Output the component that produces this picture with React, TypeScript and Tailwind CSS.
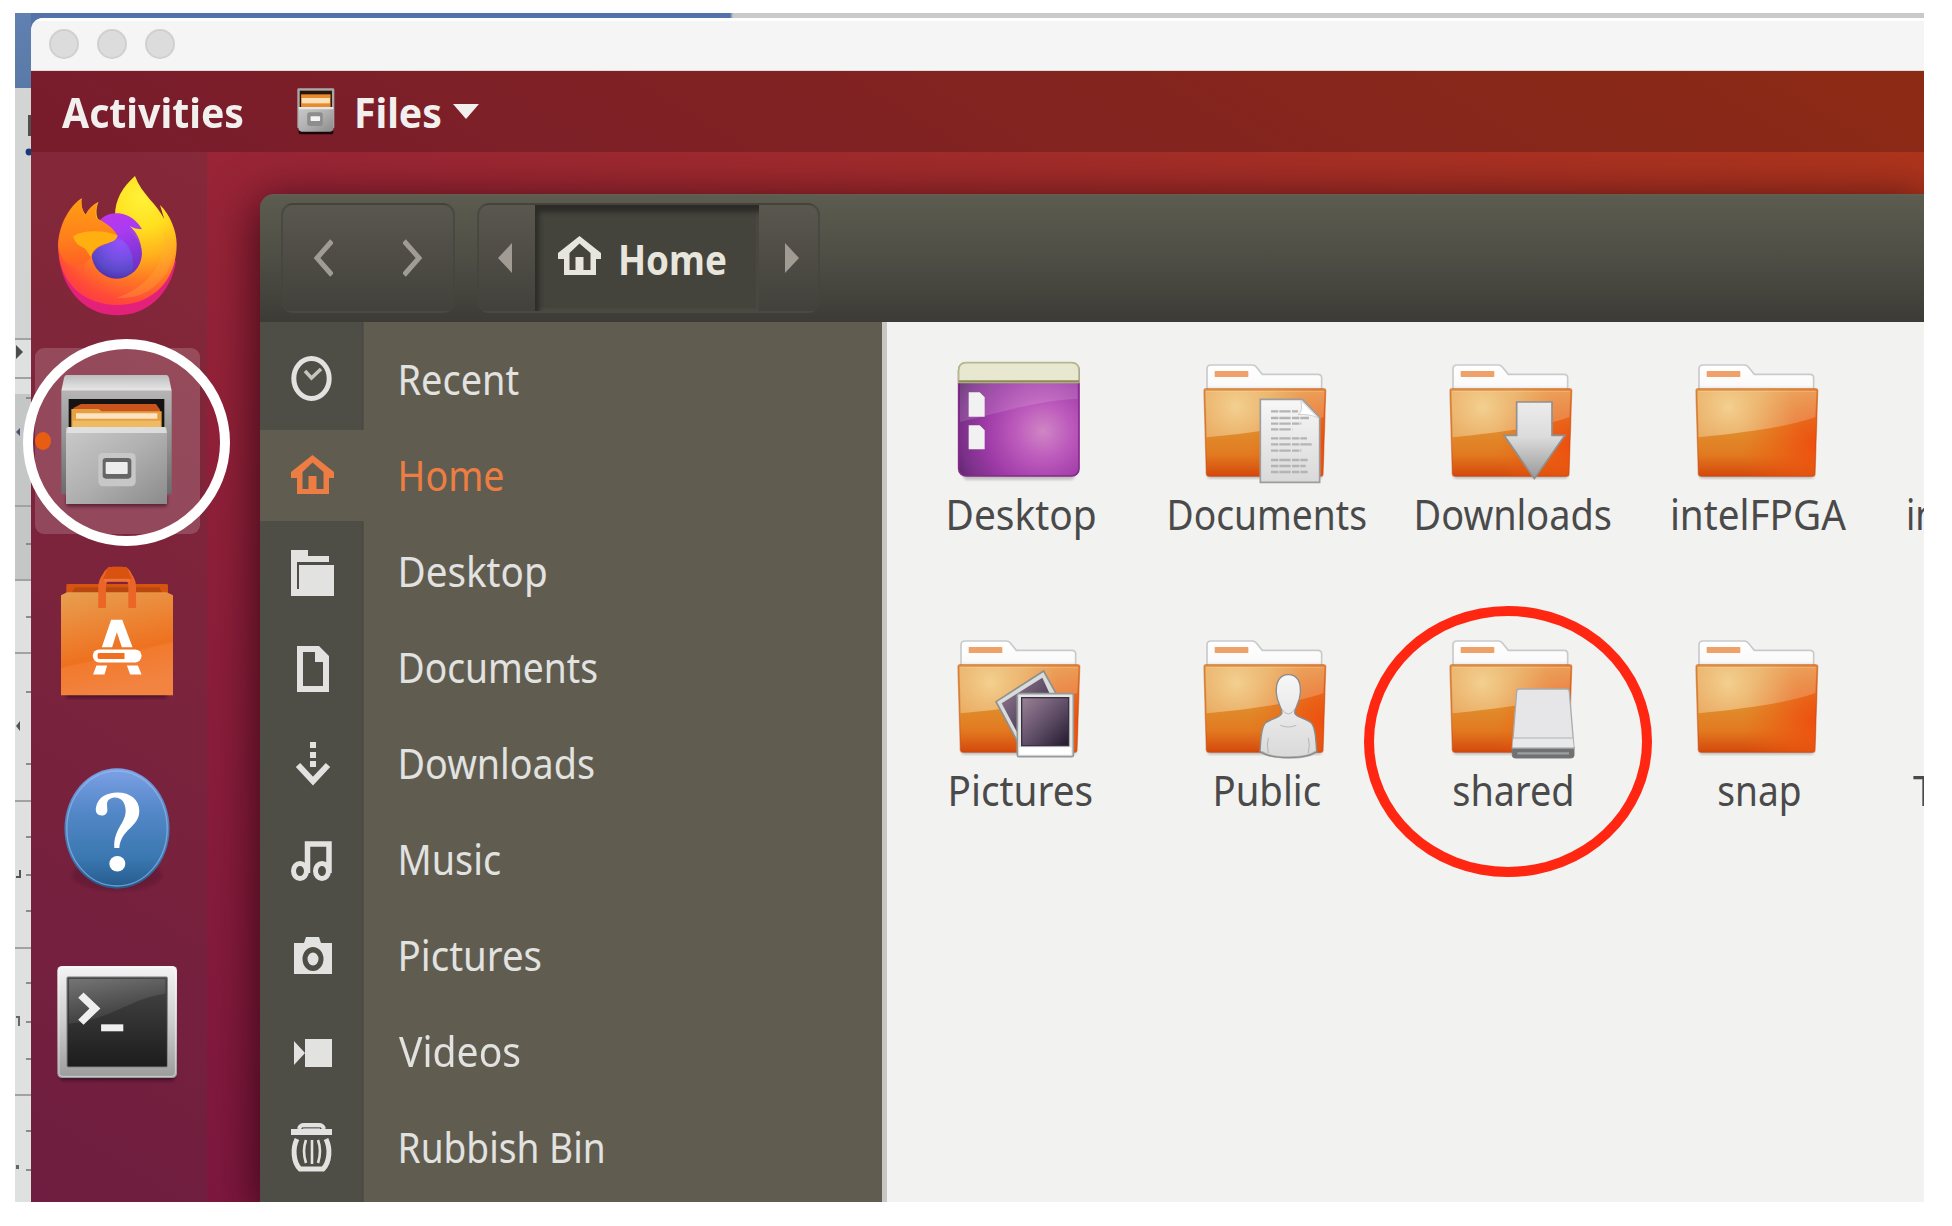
import React, { useLayoutEffect, useState } from "react";

type LabelProps = { children: string; width: number; bold?: boolean; className?: string };

/* Single line of text whose glyphs are condensed to occupy `width` pixels. */
function Label({ children, width, bold, className = "" }: LabelProps) {
  const [fit, setFit] = useState({ scale: 1, left: 0 });
  useLayoutEffect(() => {
    const ctx = document.createElement("canvas").getContext("2d");
    if (!ctx) return;
    ctx.font = `${bold ? 700 : 400} 42px "Noto Sans"`;
    const m = ctx.measureText(children);
    const bearing = m.actualBoundingBoxLeft * 0.4;
    const scale = width / (m.actualBoundingBoxRight + bearing);
    setFit({ scale, left: bearing * scale });
  }, [children, width, bold]);
  return (
    <div className={`h-[58px] shrink-0 ${className}`} style={{ width }}>
      <span
        className={`block w-max origin-top-left whitespace-nowrap font-['Noto_Sans',sans-serif] text-[42px] leading-[58px] ${bold ? "font-bold" : "font-normal"}`}
        style={{ transform: `translateX(${fit.left}px) scaleX(${fit.scale})` }}
      >
        {children}
      </span>
    </div>
  );
}

function Defs() {
  return (
    <svg className="absolute h-0 w-0" aria-hidden>
      <defs>
        <radialGradient id="ffBody" gradientUnits="userSpaceOnUse" cx="425" cy="590" r="365">
          <stop offset="0" stopColor="#fff238" />
          <stop offset=".25" stopColor="#ffe01f" />
          <stop offset=".48" stopColor="#ffb01c" />
          <stop offset=".68" stopColor="#ff7724" />
          <stop offset=".86" stopColor="#ff4a38" />
          <stop offset="1" stopColor="#ff3450" />
        </radialGradient>
        <linearGradient id="ffHead" x1="0" y1="0" x2="0" y2="1">
          <stop offset="0" stopColor="#ff9f12" />
          <stop offset=".6" stopColor="#ff7f1c" />
          <stop offset="1" stopColor="#ff6024" />
        </linearGradient>
        <radialGradient id="ffGlobe" gradientUnits="userSpaceOnUse" cx="362" cy="722" r="120">
          <stop offset="0" stopColor="#9450ff" />
          <stop offset=".45" stopColor="#7350e2" />
          <stop offset=".75" stopColor="#5a48c8" />
          <stop offset="1" stopColor="#4d2ba6" />
        </radialGradient>
        <linearGradient id="ffTop" gradientUnits="userSpaceOnUse" x1="340" y1="637" x2="400" y2="800">
          <stop offset="0" stopColor="#bd36ee" />
          <stop offset=".35" stopColor="#a73cf0" />
          <stop offset="1" stopColor="#7a24c4" stopOpacity="0.6" />
        </linearGradient>
        <linearGradient id="metal" x1="0" y1="0" x2="1" y2="1">
          <stop offset="0" stopColor="#cacaca" />
          <stop offset=".5" stopColor="#b0b0b0" />
          <stop offset="1" stopColor="#8b8b8b" />
        </linearGradient>
        <linearGradient id="cabTop" x1="0" y1="0" x2="0" y2="1">
          <stop offset="0" stopColor="#bdbdbd" />
          <stop offset="1" stopColor="#e8e8e8" />
        </linearGradient>
        <linearGradient id="cabBack" x1="0" y1="0" x2="0" y2="1">
          <stop offset="0" stopColor="#b5b5b5" />
          <stop offset="1" stopColor="#6c6c6c" />
        </linearGradient>
        <linearGradient id="paper" x1="0" y1="0" x2="0" y2="1">
          <stop offset="0" stopColor="#f7f7f7" />
          <stop offset="1" stopColor="#d9d9d9" />
        </linearGradient>
        <linearGradient id="arrow" x1="0" y1="0" x2="0" y2="1">
          <stop offset="0" stopColor="#ececec" />
          <stop offset=".45" stopColor="#dcdcdc" />
          <stop offset="1" stopColor="#989898" />
        </linearGradient>
        <linearGradient id="bag" x1="0" y1="0" x2=".25" y2="1">
          <stop offset="0" stopColor="#e79f50" />
          <stop offset=".4" stopColor="#ec8434" />
          <stop offset=".68" stopColor="#ee711f" />
          <stop offset=".7" stopColor="#f17a2d" />
          <stop offset="1" stopColor="#f28340" />
        </linearGradient>
        <linearGradient id="help" x1="0" y1="0" x2="0" y2="1">
          <stop offset="0" stopColor="#7da1e6" />
          <stop offset=".35" stopColor="#5488c8" />
          <stop offset=".75" stopColor="#3a77b0" />
          <stop offset="1" stopColor="#245a8c" />
        </linearGradient>
        <linearGradient id="termFrame" x1="0" y1="0" x2="0" y2="1">
          <stop offset="0" stopColor="#f4f4f4" />
          <stop offset=".5" stopColor="#cdcdcd" />
          <stop offset="1" stopColor="#9b9b9b" />
        </linearGradient>
        <linearGradient id="termScreen" x1="0" y1="0" x2="0" y2="1">
          <stop offset="0" stopColor="#474747" />
          <stop offset="1" stopColor="#1c1c1c" />
        </linearGradient>
        <linearGradient id="termGloss" x1="0" y1="0" x2=".6" y2="1">
          <stop offset="0" stopColor="#fff" stopOpacity=".25" />
          <stop offset="1" stopColor="#fff" stopOpacity="0.02" />
        </linearGradient>
        <linearGradient id="folder" x1="0" y1="0" x2="0" y2="1">
          <stop offset="0" stopColor="#e39a3e" />
          <stop offset=".5" stopColor="#e08c2c" />
          <stop offset=".75" stopColor="#e27a20" />
          <stop offset="1" stopColor="#d4480c" />
        </linearGradient>
        <radialGradient id="folderRed" gradientUnits="userSpaceOnUse" cx="370" cy="250" r="230">
          <stop offset="0" stopColor="#ee4d0e" />
          <stop offset=".3" stopColor="#ec5510" stopOpacity=".8" />
          <stop offset="1" stopColor="#ee6010" stopOpacity="0" />
        </radialGradient>
        <radialGradient id="folderGlow" gradientUnits="userSpaceOnUse" cx="100" cy="135" r="200">
          <stop offset="0" stopColor="#f6da9c" stopOpacity=".8" />
          <stop offset="1" stopColor="#f0b878" stopOpacity="0" />
        </radialGradient>
        <linearGradient id="tab" x1="0" y1="0" x2="0" y2="1">
          <stop offset="0" stopColor="#ffffff" />
          <stop offset=".75" stopColor="#fafafa" />
          <stop offset="1" stopColor="#d8d8d8" />
        </linearGradient>
        <radialGradient id="desk" gradientUnits="userSpaceOnUse" cx="258" cy="208" r="290">
          <stop offset="0" stopColor="#d086c4" />
          <stop offset=".28" stopColor="#bd5bbd" />
          <stop offset=".6" stopColor="#9d3aa6" />
          <stop offset=".85" stopColor="#7a3088" />
          <stop offset="1" stopColor="#592569" />
        </radialGradient>
        <linearGradient id="photo" x1="0" y1="0" x2="1" y2="1">
          <stop offset="0" stopColor="#9a8296" />
          <stop offset=".5" stopColor="#62506a" />
          <stop offset="1" stopColor="#231a2b" />
        </linearGradient>
        <filter id="soft" x="-20%" y="-20%" width="140%" height="140%">
          <feGaussianBlur stdDeviation="5" />
        </filter>
      </defs>
    </svg>
  );
}

function Firefox() {
  return (
    <svg viewBox="174 525 357 420" className="mt-[24px] ml-[27px] h-[140px] w-[119px] shrink-0 overflow-visible">
      <path d="M176 765C190 880 265 943 352 943C440 943 512 880 528 780Z" fill="#e3217a" />
      <path
        d="M245 592C203 620 174 680 174 738C178 850 255 912 352 912C455 912 530 840 530 730C530 690 510 640 480 612L493 655C472 610 425 580 405 525C368 558 345 595 345 645L300 662C288 650 286 630 295 603C278 612 266 625 257 641C247 630 242 612 245 592Z"
        fill="url(#ffBody)"
      />
      <path d="M493 690C500 790 440 860 350 890C440 900 515 830 526 740Z" fill="#ffb13b" opacity=".3" />
      <ellipse cx="350" cy="758" rx="75" ry="75" fill="url(#ffGlobe)" />
      <path
        d="M296 664C308 642 335 634 357 637C390 641 412 660 426 685C414 684 400 682 389 675C412 695 425 724 426 758C424 785 412 806 396 817C408 770 385 715 350 712L290 690Z"
        fill="url(#ffTop)"
      />
      <path
        d="M245 592C212 618 178 670 175 735C185 800 240 815 274 768C280 748 295 735 325 727L352 705C348 690 320 665 290 652C284 638 287 620 295 603C276 612 266 625 257 641C247 630 242 612 245 592Z"
        fill="url(#ffHead)"
      />
      <path
        d="M219 706C245 688 285 690 315 692L353 703C350 724 325 724 303 733C285 741 276 752 273 768C261 755 262 742 240 735C228 728 222 716 219 706Z"
        fill="#ffb010"
      />
    </svg>
  );
}

function Cabinet({ className }: { className: string }) {
  return (
    <svg viewBox="185 128 333 402" preserveAspectRatio="none" className={className}>
      <rect x="200" y="490" width="304" height="36" rx="10" fill="#3c0c22" opacity=".6" filter="url(#soft)" />
      <path d="M186 178H517V488H186Z" fill="url(#cabBack)" />
      <path d="M203 131H500Q507 131 509 140L517 178H186L194 140Q196 131 203 131Z" fill="url(#cabTop)" />
      <rect x="208" y="203" width="287" height="90" fill="#161412" />
      <path d="M222 230L245 218H470L482 235V290H222Z" fill="#c9541c" />
      <path d="M216 233H298L306 240H487V290H216Z" fill="#e6a041" />
      <path d="M230 246H474V262H230Z" fill="#fbe3c4" />
      <path d="M220 268H484V290H220Z" fill="#eebb63" />
      <path d="M206 287H498Q503 287 503 292V518H200V292Q201 287 206 287Z" fill="url(#metal)" />
      <path d="M206 287H498L503 305H202Z" fill="#e6e6e6" opacity=".8" />
      <rect x="297" y="365" width="112" height="100" rx="14" fill="#c7c7c7" />
      <rect x="310" y="380" width="86" height="62" rx="10" fill="#666" />
      <rect x="319" y="392" width="66" height="36" rx="3" fill="#ededed" />
    </svg>
  );
}

function SmallCabinet() {
  return (
    <svg viewBox="892 264 112 138" preserveAspectRatio="none" className="mt-[17px] ml-[54px] h-[46px] w-[38px] shrink-0 overflow-visible">
      <rect x="897" y="385" width="102" height="18" rx="5" fill="#1c0408" />
      <rect x="893" y="265" width="109" height="120" rx="4" fill="#a9a9a9" />
      <rect x="900" y="272" width="95" height="50" fill="#2a1608" />
      <rect x="904" y="283" width="87" height="38" fill="#e98a2c" />
      <rect x="906" y="294" width="83" height="16" fill="#fbe0b8" />
      <path d="M897 321H999V388Q998 395 990 395H906Q898 395 897 388Z" fill="url(#metal)" />
      <path d="M897 321H999V328H897Z" fill="#e6e6e6" />
      <rect x="922" y="337" width="46" height="41" rx="8" fill="#8d8d8d" />
      <rect x="932" y="349" width="28" height="14" rx="2" fill="#f4f4f4" />
    </svg>
  );
}

function SoftwareBag() {
  return (
    <svg viewBox="184 706 335 400" preserveAspectRatio="none" className="mt-[32px] ml-[30px] h-[133px] w-[112px] shrink-0 overflow-visible">
      <rect x="200" y="1075" width="300" height="28" fill="#3c0c22" opacity=".7" filter="url(#soft)" />
      <path d="M205 760H497L504 762V800H200V762Z" fill="#d65410" />
      <path d="M225 770H478L490 796H210Z" fill="#a83f10" opacity=".6" />
      <path d="M184 794L202 785H500L519 794V1095H184Z" fill="url(#bag)" />
      <path d="M307 832V770Q307 752 318 738Q326 720 340 720H366Q380 720 387 738Q397 752 397 770V832" fill="none" stroke="#eb6626" strokeWidth="23" />
      <path d="M325 709H380L396 745H310Z" fill="#d95210" />
      <path d="M313 749H390" stroke="#f0733a" strokeWidth="9" />
      <path d="M334 868H367L398 950H366L351 905L337 950H306Z" fill="#fff" />
      <rect x="279" y="957" width="146" height="39" rx="19" fill="#fff" />
      <path d="M296 968H374V986H296Q290 977 296 968Z" fill="#f0701f" />
      <path d="M290 1005H322L314 1032H280Z" fill="#fff" />
      <path d="M381 1005H414L425 1032H391Z" fill="#fff" />
    </svg>
  );
}

function Help() {
  return (
    <svg viewBox="192 107 318 364" className="mt-[69px] ml-[33px] h-[121px] w-[106px] shrink-0 overflow-visible">
      <ellipse cx="351" cy="430" rx="135" ry="46" fill="#3c0c22" opacity=".25" filter="url(#soft)" />
      <ellipse cx="351" cy="289" rx="158" ry="181" fill="url(#help)" />
      <ellipse cx="351" cy="289" rx="151" ry="173" fill="none" stroke="#9dc0ee" strokeWidth="4" opacity=".6" />
      <path
        d="M305 250C290 250 285 237 288 225C293 195 322 181 352 181C392 181 418 203 418 236C418 285 362 290 358 348H343C340 290 377 275 377 235C377 212 364 196 345 196C333 196 321 203 321 215C321 225 322 228 322 234C322 243 315 250 305 250Z"
        fill="#fff"
      />
      <ellipse cx="352" cy="395" rx="24" ry="23" fill="#fff" />
    </svg>
  );
}

function Terminal() {
  return (
    <svg viewBox="170 704 365 345" className="mt-[76px] ml-[26px] h-[115px] w-[121px] shrink-0 overflow-visible">
      <rect x="180" y="1010" width="345" height="42" rx="10" fill="#300a20" opacity=".7" filter="url(#soft)" />
      <rect x="171" y="706" width="361" height="338" rx="14" fill="url(#termFrame)" />
      <rect x="176" y="711" width="351" height="328" rx="10" fill="none" stroke="#fff" strokeWidth="3" opacity=".5" />
      <rect x="200" y="739" width="303" height="272" rx="3" fill="url(#termScreen)" stroke="#8a8a8a" strokeWidth="3" />
      <path d="M206 745H497V790C400 800 330 870 206 880Z" fill="url(#termGloss)" />
      <path d="M234 802L250 786L301 834L250 883L234 868L268 834Z" fill="#efefef" />
      <rect x="303" y="882" width="67" height="21" fill="#efefef" />
    </svg>
  );
}

function Ruler() {
  const short = [398, 544, 617, 692, 764, 837, 875, 911, 983, 1022, 1059, 1131, 1170];
  const long = [339, 378, 506, 580, 653, 801, 948, 1095];
  return (
    <svg viewBox="15 88 16 1114" className="h-[1114px] w-4">
      <rect x="15" y="88" width="16" height="1114" fill="#dfe0e0" />
      <rect x="15" y="88" width="16" height="250" fill="#d3d4d4" />
      <rect x="15" y="394" width="16" height="186" fill="#c5c6c6" />
      {long.map((y) => (
        <rect key={y} x="15" y={y - 1} width="16" height="2" fill="#a2a2a2" />
      ))}
      {short.map((y) => (
        <rect key={y} x="26" y={y - 1} width="5" height="2" fill="#8c8c8c" />
      ))}
      <path d="M16 345L23 352L16 359Z" fill="#4c4c4c" />
      <path d="M20 428V436L16 432Z" fill="#4e4e66" />
      <path d="M20 721V731L16 726Z" fill="#555" />
      <path d="M16 877H20V870" fill="none" stroke="#555" strokeWidth="2" />
      <path d="M16 1017H19V1026" fill="none" stroke="#666" strokeWidth="2" />
      <rect x="16" y="1165" width="3" height="4" fill="#666" />
      <rect x="28" y="115" width="3" height="21" fill="#505050" />
      <circle cx="29" cy="152" r="3.4" fill="#143c7c" />
    </svg>
  );
}

function Dock() {
  return (
    <aside className="flex w-[176px] shrink-0 flex-col bg-[rgba(60,60,64,0.2)]">
      <Firefox />
      <div className="mt-[32px] ml-1 flex h-[186px] w-[165px] shrink-0 items-start rounded-[9px] bg-white/17">
        <span className="mt-[84px] h-[18px] w-[16px] rounded-[50%] bg-[#e95d13]" />
        <Cabinet className="mt-[26px] ml-[10px] h-[134px] w-[111px] overflow-visible" />
      </div>
      <SoftwareBag />
      <Help />
      <Terminal />
    </aside>
  );
}

const HOME_PATH = "M21.5 1L0 18V24H6V40H38V24H43V18ZM21.5 8.5L32.5 18V35H25.5V22H17.5V35H11.5V18Z";

function HomeIcon({ className }: { className: string }) {
  return (
    <svg viewBox="0 0 43 48" className={className} fill="currentColor">
      <path fillRule="evenodd" d={HOME_PATH} />
    </svg>
  );
}

function HeaderBar() {
  return (
    <header className="flex h-[128px] shrink-0 bg-linear-to-b from-[#5c5c50] via-[#4f4e45] to-[#3c3b36] pt-[9px] pl-[21px] text-[#a09c94] shadow-[inset_0_2px_0_#62635440]">
      <div className="flex h-[110px] w-[174px] items-center justify-between rounded-[12px] border-2 border-[#45453d]/70 bg-linear-to-b from-[#5a574f] to-[#42413b] px-[30px]">
        <svg viewBox="0 0 20 38" className="h-[38px] w-5" fill="none" stroke="currentColor" strokeWidth="5">
          <path d="M19 2L4 19L19 36" />
        </svg>
        <svg viewBox="0 0 20 38" className="h-[38px] w-5" fill="none" stroke="currentColor" strokeWidth="5">
          <path d="M1 2L16 19L1 36" />
        </svg>
      </div>
      <div className="ml-[22px] flex h-[110px] w-[343px] items-stretch overflow-hidden rounded-[12px] border-2 border-[#45453d]/70 bg-linear-to-b from-[#5a574f] to-[#42413b]">
        <div className="flex w-[56px] items-center justify-center">
          <svg viewBox="0 0 14 30" className="ml-[-5px] h-[30px] w-[14px]" fill="currentColor">
            <path d="M14 0V30L0 15Z" />
          </svg>
        </div>
        <div className="flex w-[224px] bg-[#44433c] text-[#e8e6dc] shadow-[inset_4px_7px_5px_#2c2b27,inset_-3px_-3px_2px_#4c4943]">
          <HomeIcon className="mt-[30px] ml-[23px] h-12 w-[43px]" />
          <Label bold width={107} className="mt-[25px] ml-[18px]">Home</Label>
        </div>
        <div className="flex flex-1 items-center">
          <svg viewBox="0 0 14 30" className="ml-[26px] h-[30px] w-[14px]" fill="currentColor">
            <path d="M0 0V30L14 15Z" />
          </svg>
        </div>
      </div>
    </header>
  );
}

type Place = { name: string; width: number; icon: React.ReactNode };

const places: Place[] = [
  {
    name: "Recent",
    width: 120,
    icon: (
      <g fill="none" stroke="currentColor">
        <ellipse cx="20.5" cy="20.5" rx="17.7" ry="20" strokeWidth="5" />
        <path d="M14 13L20.5 20L30 11" strokeWidth="3.5" opacity=".8" />
      </g>
    ),
  },
  { name: "Home", width: 104, icon: <path fillRule="evenodd" d={HOME_PATH} /> },
  {
    name: "Desktop",
    width: 147,
    icon: <path fillRule="evenodd" d="M0 0H17V6H38V12H6V39H8V15H43V46H0Z" />,
  },
  {
    name: "Documents",
    width: 198,
    icon: <path fillRule="evenodd" d="M6 0H28L38 10V46H6ZM12 6V40H32V16H24V6Z" />,
  },
  {
    name: "Downloads",
    width: 195,
    icon: (
      <g>
        <rect x="19" y="0" width="6" height="6" />
        <rect x="19" y="10" width="6" height="6" />
        <rect x="19" y="19" width="6" height="6" />
        <path d="M7 23L22 39L37 23" fill="none" stroke="currentColor" strokeWidth="6" />
      </g>
    ),
  },
  {
    name: "Music",
    width: 101,
    icon: (
      <g fill="none" stroke="currentColor">
        <ellipse cx="9" cy="33" rx="6.5" ry="7.5" strokeWidth="5" />
        <ellipse cx="31" cy="33" rx="6.5" ry="7.5" strokeWidth="5" />
        <path d="M16.5 35V6H38V35" strokeWidth="5.5" />
      </g>
    ),
  },
  {
    name: "Pictures",
    width: 142,
    icon: (
      <g>
        <path fillRule="evenodd" d="M3 9H13L15 3H28L30 9H41V40H3ZM22 13A10.500 12 0 1 0 22 37A10.500 12 0 1 0 22 13Z" />
        <ellipse cx="22" cy="25" rx="5.500" ry="6.500" />
      </g>
    ),
  },
  {
    name: "Videos",
    width: 121,
    icon: <path d="M14 9H41V37H14ZM3 11L14 23L3 35Z" />,
  },
  {
    name: "Rubbish Bin",
    width: 204,
    icon: (
      <g fill="none" stroke="currentColor">
        <path d="M8 3Q9 -1 13 -1H28Q32 -1 33 3" strokeWidth="4" />
        <path d="M12 2.500H29" strokeWidth="2" opacity=".6" />
        <path d="M0 6H41" strokeWidth="6" />
        <path d="M6 13C1.500 22 2 36 9 43H32C39 36 39.500 22 35 13" strokeWidth="5" />
        <path d="M15 14Q11 25 15 37M21 14V38M27 14Q31 25 27 37" strokeWidth="2.600" />
      </g>
    ),
  },
];

function Sidebar() {
  return (
    <nav className="flex w-[622px] shrink-0 flex-col bg-[linear-gradient(to_right,#4f4e46_0,#4f4e46_101px,#48463f_103px,#605d50_104px)] pt-[10px]">
      {places.map((p) => (
        <div key={p.name} className={`flex h-24 shrink-0 ${p.name === "Home" ? "text-[#ee7d43]" : "text-[#e2e2e0]"}`}>
          <div className={`mt-[2px] h-[91px] w-[104px] ${p.name === "Home" ? "bg-[#605d50]" : ""}`}>
            <svg viewBox="0 0 43 48" className="mt-6 ml-[31px] h-12 w-[43px] overflow-visible" fill="currentColor">
              {p.icon}
            </svg>
          </div>
          <Label width={p.width} className="mt-[18px] ml-[35px]">{p.name}</Label>
        </div>
      ))}
    </nav>
  );
}

function Folder({ children }: { children?: React.ReactNode }) {
  const front = "M3 87Q3 80 9 80H362Q369 80 368 87L360 337Q359 343 352 343H18Q11 343 10 336Z";
  return (
    <svg viewBox="0 0 372 360" className="h-[120px] w-[124px] shrink-0 overflow-visible">
      <rect x="14" y="325" width="342" height="24" rx="8" fill="#777" opacity=".5" filter="url(#soft)" />
      <path d="M12 90V20Q12 9 24 9H148Q155 9 160 15L178 37H345Q356 37 356 48V90Z" fill="url(#tab)" stroke="#c9cacb" strokeWidth="5" />
      <rect x="35" y="27" width="101" height="18" rx="2" fill="#eea168" />
      <path d={front} fill="url(#folder)" />
      <path d={front} fill="url(#folderRed)" />
      <path d="M8 88H364L361 165C280 195 150 212 11 226Z" fill="#fff" opacity=".2" />
      <path d="M8 88H364L361 165C280 195 150 212 11 226Z" fill="url(#folderGlow)" />
      <path d={front} fill="none" stroke="#c2410c" strokeWidth="4" opacity=".45" />
      <path d="M10 88H362" stroke="#fff" strokeWidth="4" opacity=".22" />
      {children}
    </svg>
  );
}

const emblems = {
  documents: (
    <g>
      <path d="M172 112H298L350 166V361H172Z" fill="url(#paper)" stroke="#9d9d9d" strokeWidth="5" />
      <path d="M294 116Q300 150 285 158Q320 155 346 168Z" fill="#fff" stroke="#bbb" strokeWidth="2" />
      <path
        d="M204 148H285M204 168H318M204 185H295M204 202H268M204 229H312M204 247H328M204 266H295M204 294H314M204 312H308M204 330H314"
        stroke="#b4b4b4"
        strokeWidth="7"
        strokeDasharray="22 3 34 4"
      />
    </g>
  ),
  downloads: <path d="M203 120H309V220H348L256 350L165 220H203Z" fill="url(#arrow)" stroke="#909090" strokeWidth="5" />,
  pictures: (
    <g>
      <path d="M260 99L117 191L184 315L310 190Z" fill="#d9dcdb" stroke="#8e9090" strokeWidth="5" />
      <path d="M256 119L134 196L184 290L284 180Z" fill="url(#photo)" />
      <rect x="181" y="167" width="168" height="189" rx="5" fill="#e4e6e6" stroke="#979a9a" strokeWidth="5" />
      <rect x="194" y="179" width="141" height="144" fill="url(#photo)" stroke="#3b3042" strokeWidth="4" />
      <rect x="187" y="328" width="156" height="22" fill="#fff" />
    </g>
  ),
  public: (
    <g stroke="#8b8b8b" strokeWidth="4">
      <path
        d="M256 110C283 110 294 132 292 165C290 195 276 207 275 225C280 240 310 240 326 256C340 275 338 310 341 340C315 365 200 365 171 340C174 310 172 275 186 256C202 242 232 240 237 225C236 207 222 195 220 165C218 132 230 110 256 110Z"
        fill="url(#paper)"
      />
      <path d="M196 345Q190 320 196 300M316 345Q322 320 316 300M232 262Q256 272 280 262M234 210Q256 246 278 210" fill="none" strokeWidth="3" opacity=".5" />
      <path d="M176 342C205 364 310 364 337 342" fill="none" strokeWidth="7" opacity=".5" />
    </g>
  ),
  shared: (
    <g>
      <path d="M190 326H375V352Q375 360 366 360H199Q190 360 190 352Z" fill="#6f7172" stroke="#777" strokeWidth="3" />
      <path d="M205 346H360" stroke="#9d9fa0" strokeWidth="7" />
      <path d="M210 153H354Q360 153 361 160L375 330H190L203 160Q204 153 210 153Z" fill="#e6e6e8" stroke="#a9abac" strokeWidth="4" />
      <path d="M193 300H373" stroke="#c2c4c5" strokeWidth="4" />
      <path d="M192 304H372L374 328H191Z" fill="#e9e9ea" />
    </g>
  ),
};

function DesktopIcon() {
  return (
    <svg viewBox="0 0 372 360" className="h-[120px] w-[124px] shrink-0 overflow-visible">
      <rect x="20" y="325" width="332" height="28" rx="10" fill="#888" opacity=".5" filter="url(#soft)" />
      <rect x="5" y="3" width="361" height="339" rx="22" fill="url(#desk)" stroke="#86298c" strokeWidth="5" />
      <path d="M9 62H362V110C250 115 130 150 9 180Z" fill="#fff" opacity=".13" />
      <path d="M5 61V25Q5 2 28 2H343Q366 2 366 25V61Z" fill="#e8e8d0" stroke="#b6b890" strokeWidth="5" />
      <path d="M5 58H366" stroke="#8c8c50" strokeWidth="6" />
      <path d="M35 91H68L83 106V164H35Z" fill="#f1f1f1" />
      <path d="M35 190H68L83 205V262H35Z" fill="#f1f1f1" />
    </svg>
  );
}

type Item = { name: string; width: number; icon: React.ReactNode };

const rows: { items: Item[]; cut: React.ReactNode }[] = [
  {
    items: [
      { name: "Desktop", width: 148, icon: <DesktopIcon /> },
      { name: "Documents", width: 198, icon: <Folder>{emblems.documents}</Folder> },
      { name: "Downloads", width: 196, icon: <Folder>{emblems.downloads}</Folder> },
      { name: "intelFPGA", width: 175, icon: <Folder /> },
    ],
    cut: <Label width={28} className="ml-[27px]">in</Label>,
  },
  {
    items: [
      { name: "Pictures", width: 143, icon: <Folder>{emblems.pictures}</Folder> },
      { name: "Public", width: 106, icon: <Folder>{emblems.public}</Folder> },
      { name: "shared", width: 119, icon: <Folder>{emblems.shared}</Folder> },
      { name: "snap", width: 82, icon: <Folder /> },
    ],
    cut: <Label width={22} className="ml-[33px]">T</Label>,
  },
];

function FileGrid() {
  return (
    <main className="flex flex-1 flex-col overflow-hidden border-l-[5px] border-[#c9c7c4] bg-[#f2f2f0] pt-[40px] pl-[9px] text-[#4a4a4a]">
      {rows.map((row, i) => (
        <div key={i} className="flex h-[276px] shrink-0">
          {row.items.map((it) => (
            <div key={it.name} className="flex w-[246px] shrink-0 flex-col items-center">
              {it.icon}
              <Label width={it.width} className="mt-[3px] ml-[3px]">{it.name}</Label>
            </div>
          ))}
          <div className="w-[44px] shrink-0 overflow-hidden pt-[123px]">{row.cut}</div>
        </div>
      ))}
    </main>
  );
}

export default function App() {
  return (
    <div className="relative h-[1226px] w-[1952px] overflow-hidden bg-white pt-[13px] pl-[15px]">
      <Defs />
      <div className="flex h-[1189px] w-[1909px] overflow-hidden bg-[linear-gradient(to_right,#5274a8_0,#5274a8_715px,#c9c9c9_718px)]">
        <div className="flex w-4 shrink-0 flex-col">
          <div className="h-[75px] bg-linear-to-b from-[#6080b2] to-[#5a7aa6]" />
          <Ruler />
        </div>
        <div className="mt-[5px] flex flex-1 flex-col overflow-hidden rounded-tl-[12px]">
          <div className="flex h-[53px] shrink-0 items-center gap-[18px] border-t-[3px] border-b border-t-white border-b-[#dcdcdc] bg-[#f5f5f5] pb-[3px] pl-[18px]">
            <span className="h-[30px] w-[30px] rounded-full border-2 border-[#d0d0d0] bg-[#dcdcdc]" />
            <span className="h-[30px] w-[30px] rounded-full border-2 border-[#d0d0d0] bg-[#dcdcdc]" />
            <span className="h-[30px] w-[30px] rounded-full border-2 border-[#d0d0d0] bg-[#dcdcdc]" />
          </div>
          <div className="flex flex-1 flex-col bg-[linear-gradient(to_top_right,#7c1640,#982437_50%,#b0361a)]">
            <div className="flex h-[81px] shrink-0 bg-black/20 text-[#f2f0ee]">
              <Label bold width={181} className="mt-[12px] ml-[31px]">Activities</Label>
              <SmallCabinet />
              <Label bold width={86} className="mt-[12px] ml-[20px]">Files</Label>
              <svg viewBox="0 0 26 15" className="mt-[33px] ml-[12px] h-[15px] w-[26px]" fill="currentColor">
                <path d="M0 0H26L13 15Z" />
              </svg>
            </div>
            <div className="flex flex-1">
              <Dock />
              <div className="flex flex-1 overflow-hidden pt-[42px] pl-[53px]">
                <div className="flex flex-1 flex-col overflow-hidden rounded-tl-[14px] shadow-[0_10px_46px_4px_rgba(30,0,10,0.72)]">
                  <HeaderBar />
                  <div className="flex flex-1">
                    <Sidebar />
                    <FileGrid />
                  </div>
                </div>
              </div>
            </div>
          </div>
        </div>
      </div>
      <div className="absolute top-[339px] left-[23px] h-[207px] w-[207px] rounded-[50%] border-[10px] border-white" />
      <div className="absolute top-[606px] left-[1364px] h-[271px] w-[288px] rounded-[50%] border-[10px] border-[#ff2712]" />
    </div>
  );
}
